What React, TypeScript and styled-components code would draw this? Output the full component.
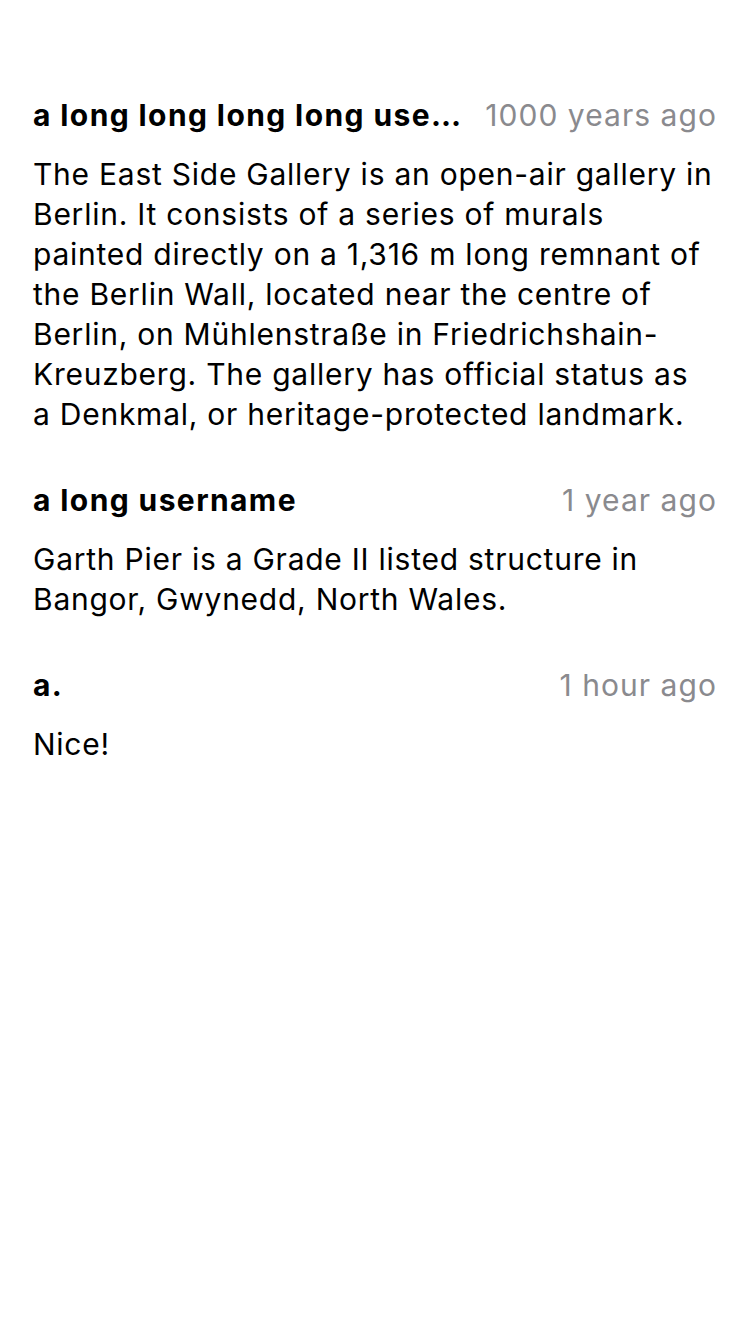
import React from "react";
import styled, { createGlobalStyle } from "styled-components";

const Global = createGlobalStyle`
  html, body { margin: 0; padding: 0; background: #ffffff; }
  body { font-family: Inter, "Noto Sans", "Liberation Sans", sans-serif; -webkit-font-smoothing: antialiased; }
`;

const List = styled.div`
  display: flex;
  flex-direction: column;
  gap: 46px;
  padding: 95px 33px 0 33px;
  width: 750px;
  box-sizing: border-box;
`;

const Comment = styled.div`
  display: flex;
  flex-direction: column;
  gap: 19px;
`;

const Header = styled.div`
  display: flex;
  align-items: center;
  justify-content: space-between;
  gap: 18px;
  height: 40px;
`;

const Username = styled.div`
  flex: 0 1 auto;
  min-width: 0;
  overflow: hidden;
  white-space: nowrap;
  text-overflow: ellipsis;
  font-size: 30px;
  font-weight: 700;
  color: #000;
  letter-spacing: 1.4px;
`;

const Time = styled.div`
  flex: 0 0 auto;
  font-size: 30px;
  color: #8a8a8e;
  letter-spacing: 1.05px;
`;

const Body = styled.div`
  margin-right: 4px;
  font-size: 30px;
  line-height: 40px;
  color: #000;
  letter-spacing: 0.75px;
`;

const comments = [
  {
    user: "a long long long long username",
    time: "1000 years ago",
    text:
      "The East Side Gallery is an open-air gallery in Berlin. It consists of a series of murals painted directly on a 1,316 m long remnant of the Berlin Wall, located near the centre of Berlin, on Mühlenstraße in Friedrichshain-Kreuzberg. The gallery has official status as a Denkmal, or heritage-protected landmark.",
  },
  {
    user: "a long username",
    time: "1 year ago",
    text: "Garth Pier is a Grade II listed structure in Bangor, Gwynedd, North Wales.",
  },
  { user: "a.", time: "1 hour ago", text: "Nice!" },
];

export default function App() {
  return (
    <>
      <Global />
      <List>
        {comments.map((c) => (
          <Comment key={c.user}>
            <Header>
              <Username>{c.user}</Username>
              <Time>{c.time}</Time>
            </Header>
            <Body>{c.text}</Body>
          </Comment>
        ))}
      </List>
    </>
  );
}
